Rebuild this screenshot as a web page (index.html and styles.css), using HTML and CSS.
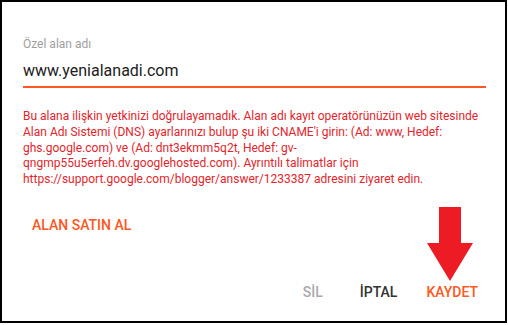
FILE: index.html
```html
<!DOCTYPE html>
<html lang="tr">
<head>
    <meta charset="UTF-8">
    <title>Özel alan adı</title>
    <link rel="stylesheet" href="styles.css">
</head>
<body>
    <div class="dialog">
        <div class="field">
            <div class="field-label">Özel alan adı</div>
            <div class="field-input">www.yenialanadi.com</div>
        </div>
        <div class="error">
            Bu alana ilişkin yetkinizi doğrulayamadık. Alan adı kayıt operatörünüzün web sitesinde
            Alan Adı Sistemi (DNS) ayarlarınızı bulup şu iki CNAME'i girin: (Ad: www, Hedef:
            ghs.google.com) ve (Ad: dnt3ekmm5q2t, Hedef: gv-<br>qngmp55u5erfeh.dv.googlehosted.com). Ayrıntılı talimatlar için
            https://support.google.com/blogger/answer/1233387 adresini ziyaret edin.
        </div>
        <div class="buy">ALAN SATIN AL</div>
        <div class="actions">
            <span class="btn btn-disabled">SİL</span>
            <span class="btn btn-cancel">İPTAL</span>
            <span class="btn btn-save">KAYDET</span>
        </div>
        <svg class="arrow" width="46" height="74" viewBox="0 0 46 74">
            <polygon points="12,0 34,0 34,36 46,36 23,74 0,36 12,36" fill="#ed1c24"/>
        </svg>
    </div>
</body>
</html>
```

FILE: styles.css
```css
body {
    margin: 0;
    font-family: Roboto, "Noto Sans", sans-serif;
    background: #fff;
}
.dialog {
    position: relative;
    box-sizing: border-box;
    width: 507px;
    height: 323px;
    border: 2px solid #000;
    padding: 34px 19px 0 21px;
}
.field-label {
    font-size: 12px;
    color: #9e9e9e;
    line-height: 16px;
}
.field-input {
    font-size: 16px;
    color: #212121;
    line-height: 20px;
    margin-top: 9px;
    padding-bottom: 5px;
    border-bottom: 2px solid #ff5722;
}
.error {
    margin-top: 21px;
    font-size: 12px;
    line-height: 15.8px;
    color: #e3242b;
}
.buy {
    margin-top: 29px;
    padding-left: 9px;
    font-size: 14px;
    font-weight: 500;
    color: #ff5722;
}
.actions {
    display: flex;
    justify-content: flex-end;
    margin-top: 51px;
    padding-right: 8px;
    gap: 29px;
}
.btn {
    font-size: 14px;
    font-weight: 500;
}
.btn-disabled {
    color: #aaa;
    margin-right: 8px;
}
.btn-cancel {
    color: #333;
}
.btn-save {
    color: #ff5722;
}
.arrow {
    position: absolute;
    left: 425px;
    top: 205px;
}
```
